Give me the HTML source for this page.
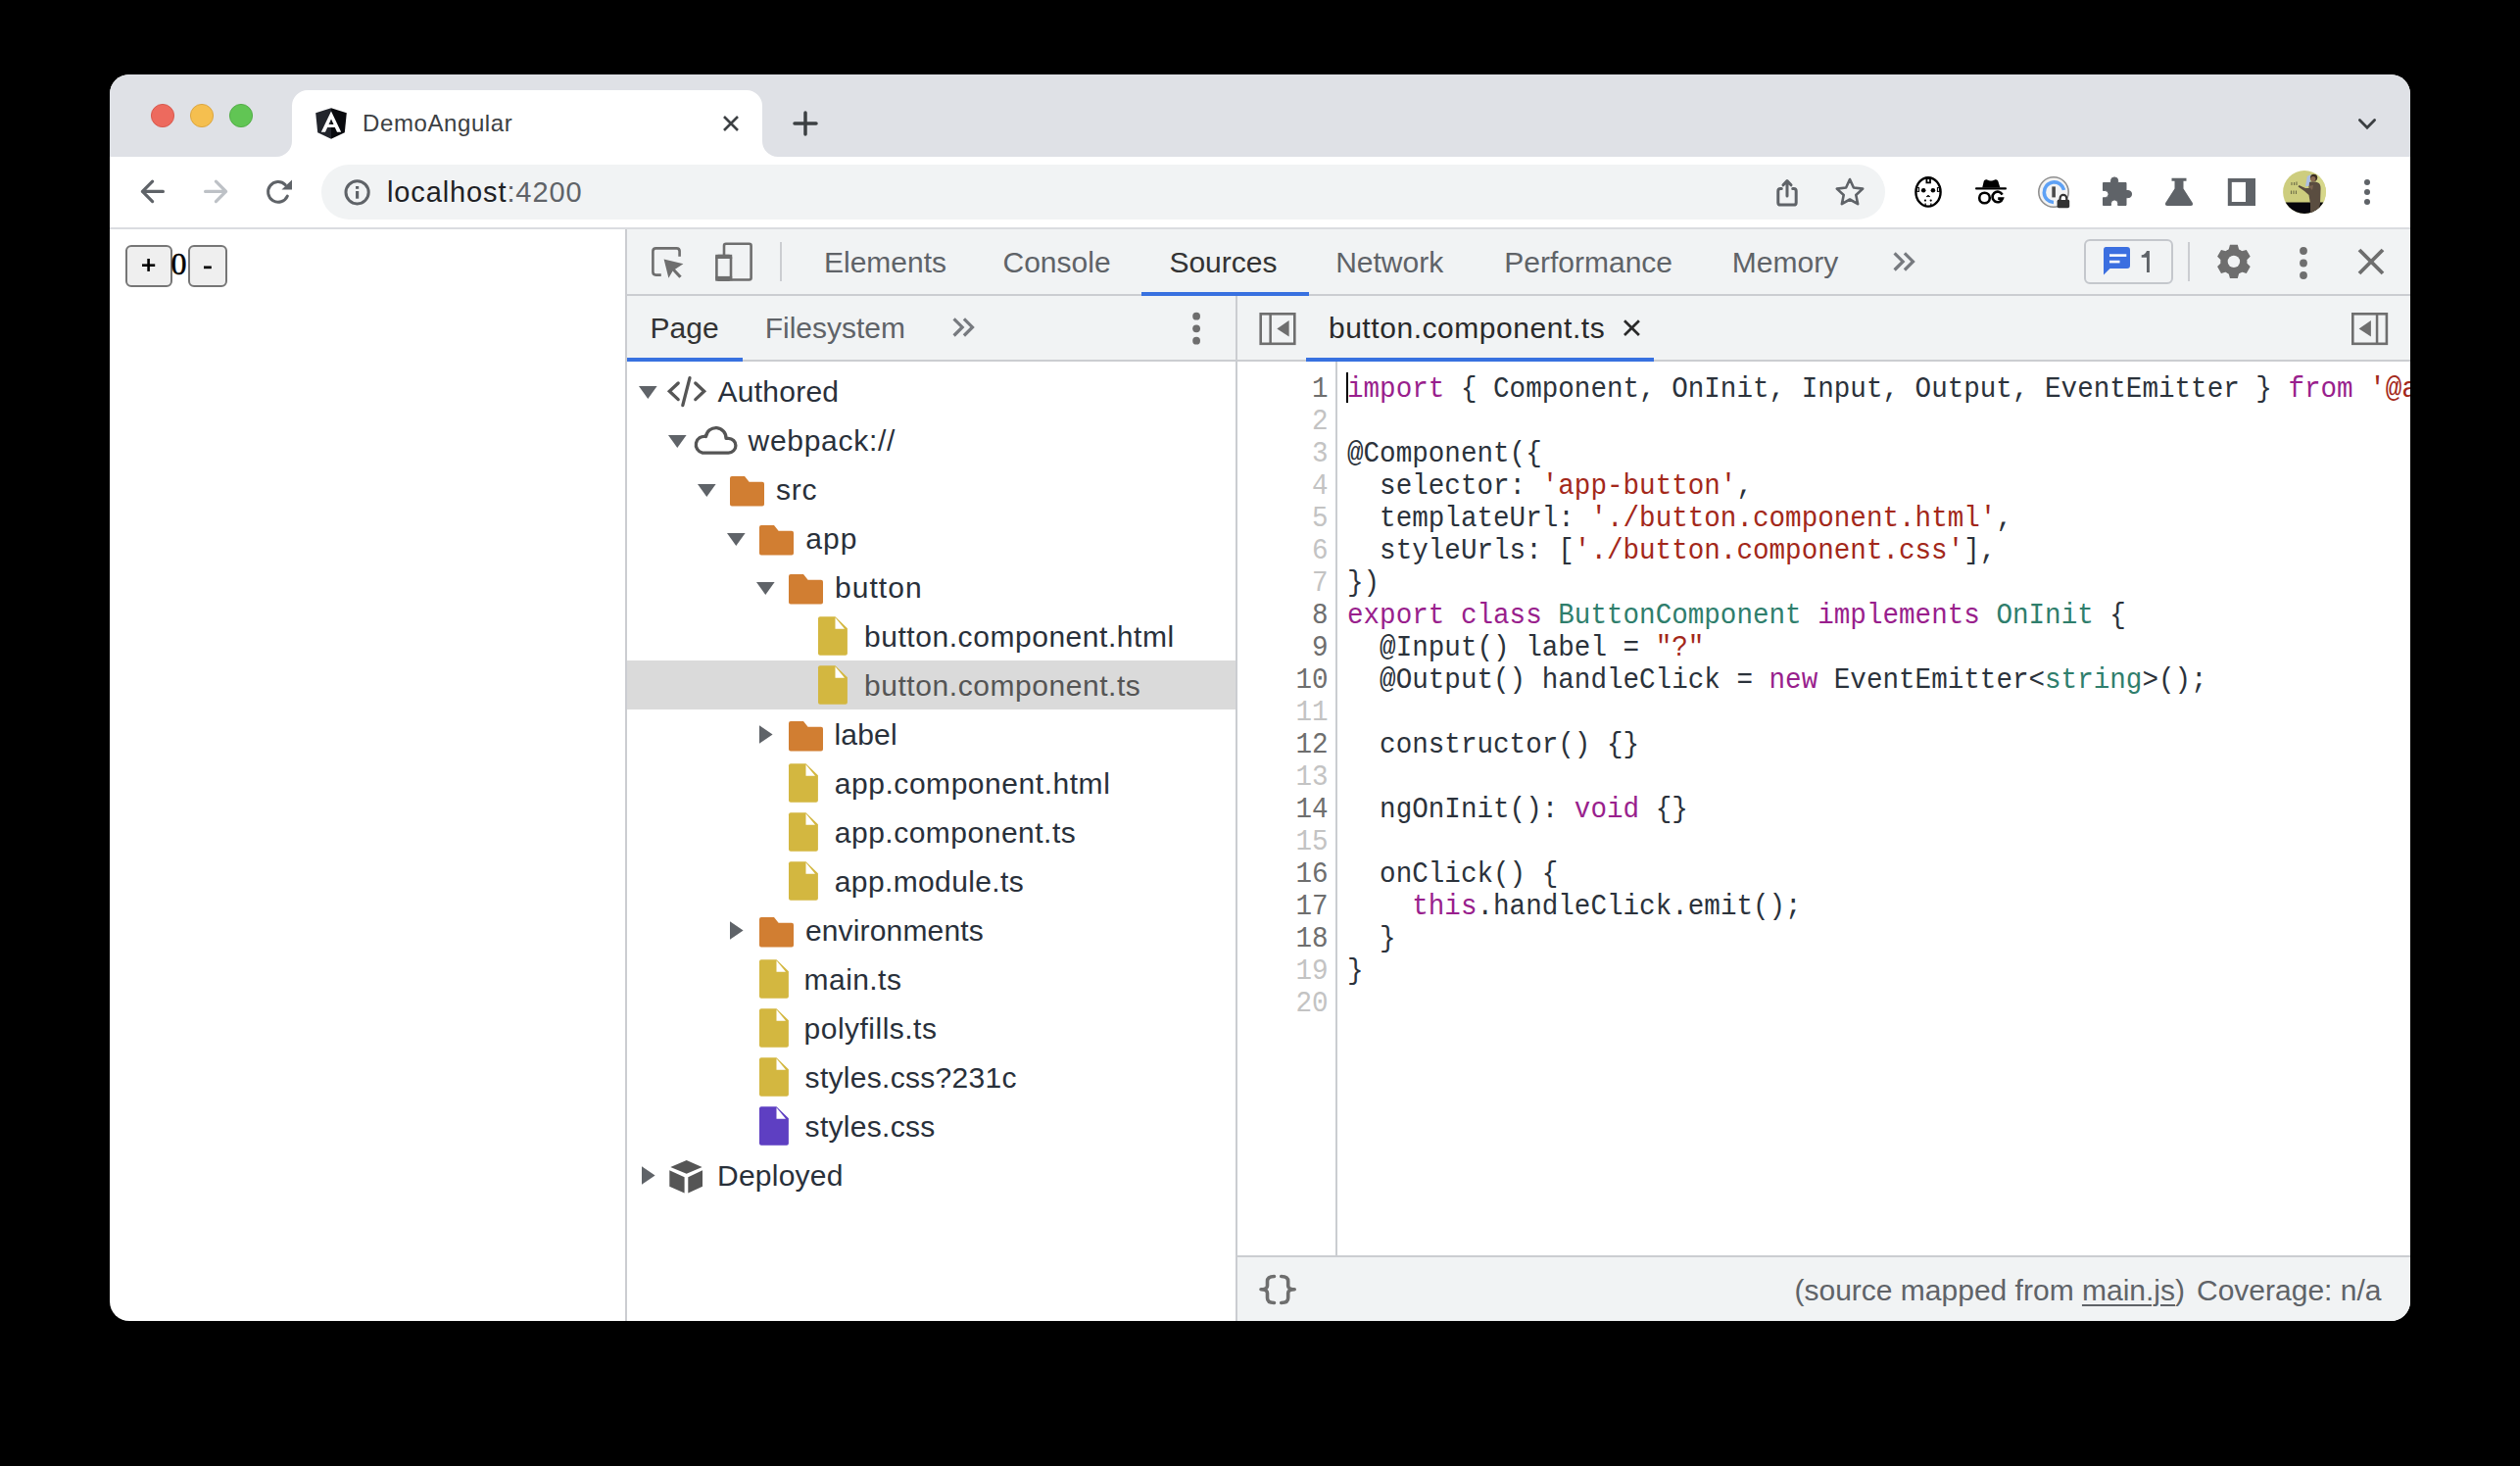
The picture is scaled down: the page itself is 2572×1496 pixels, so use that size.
<!DOCTYPE html>
<html><head><meta charset="utf-8"><title>DemoAngular - DevTools</title>
<style>
html,body{margin:0;padding:0;background:#000;width:2572px;height:1496px;overflow:hidden;}
body{position:relative;font-family:'Liberation Sans', sans-serif;}
svg{display:block}
</style></head><body>
<div id="win" style="position:absolute;left:112px;top:76px;width:2348px;height:1272px;border-radius:20px;overflow:hidden;background:#fff"><div style="position:absolute;left:-112px;top:-76px;width:2572px;height:1496px"><div style="position:absolute;left:112px;top:76px;width:2348px;height:84px;background:#dfe1e6;"></div><svg style="position:absolute;left:153px;top:105px;" width="26" height="26" viewBox="0 0 26 26"><circle cx="13" cy="13" r="11.6" fill="#ed6a5e" stroke="#d5554a" stroke-width="0.9"/></svg><svg style="position:absolute;left:193px;top:105px;" width="26" height="26" viewBox="0 0 26 26"><circle cx="13" cy="13" r="11.6" fill="#f5bf4f" stroke="#d9a23a" stroke-width="0.9"/></svg><svg style="position:absolute;left:233px;top:105px;" width="26" height="26" viewBox="0 0 26 26"><circle cx="13" cy="13" r="11.6" fill="#61c554" stroke="#4ea943" stroke-width="0.9"/></svg><svg style="position:absolute;left:266px;top:92px;" width="544" height="68" viewBox="0 0 544 68"><path d="M16,68 A16,16 0 0 0 32,52 L32,16 A16,16 0 0 1 48,0 L496,0 A16,16 0 0 1 512,16 L512,52 A16,16 0 0 0 528,68 Z" fill="#fff"/></svg><svg style="position:absolute;left:322px;top:110px;" width="32" height="32" viewBox="0 0 32 32"><path d="M16,0.2 L0.2,5.3 L2.2,25.2 L16,31.8 Z" fill="#22252c"/><path d="M16,0.2 L31.8,5.3 L29.8,25.2 L16,31.8 Z" fill="#090a0e"/><path d="M16,3.5 L26.2,24.8 L22,24.8 L19.8,19.9 L12.2,19.9 L10,24.8 L5.8,24.8 Z M16,11.6 L13.5,17.1 L18.5,17.1 Z" fill="#fff" fill-rule="evenodd"/></svg><div style="position:absolute;left:370.00px;top:113.68px;font-family:'Liberation Sans', sans-serif;font-size:24px;line-height:24px;color:#3c4043;white-space:pre;letter-spacing:0.6px">DemoAngular</div><svg style="position:absolute;left:736px;top:116px;" width="20" height="20" viewBox="0 0 20 20"><path d="M3,3 L17,17 M17,3 L3,17" stroke="#3c4043" stroke-width="2.6" stroke-linecap="butt"/></svg><svg style="position:absolute;left:809px;top:113px;" width="26" height="26" viewBox="0 0 26 26"><path d="M13,2 L13,24 M2,13 L24,13" stroke="#3c4043" stroke-width="3.5" stroke-linecap="round"/></svg><svg style="position:absolute;left:2404px;top:118px;" width="24" height="16" viewBox="0 0 24 16"><path d="M4.4,4.6 L12,12.2 L19.6,4.6" stroke="#3c4043" stroke-width="2.8" fill="none" stroke-linecap="round" stroke-linejoin="miter"/></svg><div style="position:absolute;left:112px;top:232px;width:2348px;height:2px;background:#dadce0;"></div><svg style="position:absolute;left:138px;top:180px;" width="34" height="32" viewBox="0 0 34 32"><path d="M7.4,15.4 L28.4,15.4 M17.6,5.2 L7.4,15.4 L17.6,25.6" stroke="#5f6368" stroke-width="3.2" fill="none" stroke-linecap="round" stroke-linejoin="round"/></svg><svg style="position:absolute;left:202px;top:180px;" width="34" height="32" viewBox="0 0 34 32"><path d="M7.6,15.4 L28.6,15.4 M18.4,5.2 L28.6,15.4 L18.4,25.6" stroke="#bdc1c6" stroke-width="3.2" fill="none" stroke-linecap="round" stroke-linejoin="round"/></svg><svg style="position:absolute;left:266px;top:178px;" width="36" height="36" viewBox="0 0 36 36"><path d="M27.33,22.05 A10.3,10.3 0 1 1 25.2,10.6" stroke="#5f6368" stroke-width="3" fill="none" stroke-linecap="round"/><path d="M21.5,15.6 L32,15.6 L32,5.4 Z" fill="#5f6368"/></svg><div style="position:absolute;left:328px;top:168px;width:1596px;height:56px;background:#f1f3f4;border-radius:28px"></div><svg style="position:absolute;left:350px;top:182px;" width="30" height="30" viewBox="0 0 30 30"><circle cx="14.6" cy="14.3" r="11.6" stroke="#5f6368" stroke-width="3" fill="none"/><rect x="13" y="8" width="3.2" height="2.8" fill="#5f6368"/><rect x="13" y="13" width="3.2" height="7.7" fill="#5f6368"/></svg><div style="position:absolute;left:395.00px;top:181.95px;font-family:'Liberation Sans', sans-serif;font-size:29px;line-height:29px;color:#202124;white-space:pre;letter-spacing:0.885px">localhost<span style="color:#5f6368">:4200</span></div><svg style="position:absolute;left:1808px;top:178px;" width="32" height="36" viewBox="0 0 32 36"><path d="M10.3,14.5 L9.3,14.5 Q6.8,14.5 6.8,17 L6.8,28.7 Q6.8,31.1 9.3,31.1 L22.7,31.1 Q25.2,31.1 25.2,28.7 L25.2,17 Q25.2,14.5 22.7,14.5 L21.7,14.5" stroke="#5f6368" stroke-width="3" fill="none" stroke-linecap="round"/><path d="M16,22 L16,6.8 M12,10.8 L16,6.6 L20,10.8" stroke="#5f6368" stroke-width="3" fill="none" stroke-linecap="round" stroke-linejoin="round"/></svg><svg style="position:absolute;left:1870px;top:178px;" width="36" height="36" viewBox="0 0 36 36"><polygon points="18.00,5.00 21.88,13.56 31.22,14.60 24.28,20.94 26.17,30.15 18.00,25.50 9.83,30.15 11.72,20.94 4.78,14.60 14.12,13.56" stroke="#5f6368" stroke-width="2.6" fill="none" stroke-linejoin="round"/></svg><svg style="position:absolute;left:1952px;top:178px;" width="32" height="36" viewBox="0 0 32 36"><ellipse cx="16" cy="17.9" rx="12.6" ry="14.7" stroke="#000" stroke-width="2.4" fill="#fff"/><rect x="14.4" y="4.2" width="3.6" height="4.2" stroke="#000" stroke-width="1.8" fill="none"/><circle cx="11.2" cy="16.3" r="2.3" fill="#000"/><circle cx="20.9" cy="16.3" r="2.3" fill="#000"/><path d="M14.2,22.6 L17.8,22.6 L16,21.3 Z" fill="#000" stroke="#000" stroke-width="0.8"/><rect x="4.6" y="13.6" width="2" height="3.8" stroke="#000" stroke-width="1" fill="none"/><rect x="25.4" y="13.6" width="2" height="3.8" stroke="#000" stroke-width="1" fill="none"/><circle cx="13" cy="26.6" r="1.1" fill="#000"/><circle cx="18.7" cy="26.6" r="1.1" fill="#000"/><rect x="12.5" y="29.5" width="1.3" height="2.5" fill="#000"/><rect x="18.2" y="29.5" width="1.3" height="2.5" fill="#000"/></svg><svg style="position:absolute;left:2014px;top:180px;" width="36" height="32" viewBox="0 0 36 32"><path d="M9.2,11.6 L10.8,4.8 Q11.5,3 13.6,3.3 L16,4.2 Q18,4.6 20,4.2 L22.6,3.3 Q24.6,3 25.3,4.8 L27.4,11.6 Z" fill="#000"/><rect x="2" y="11.2" width="32" height="2.2" rx="1" fill="#000"/><circle cx="11.5" cy="22" r="5.3" stroke="#000" stroke-width="2.6" fill="none"/><path d="M29.6,18.6 A5.3,5.3 0 1 0 29.9,22.6 L25.2,22.6" stroke="#000" stroke-width="2.6" fill="none"/></svg><svg style="position:absolute;left:2078px;top:178px;" width="36" height="36" viewBox="0 0 36 36"><circle cx="18" cy="18" r="15.2" stroke="#8f8f8f" stroke-width="1.6" fill="#f3f3f3"/><path d="M28.6,15.8 A10.3,10.3 0 1 0 18,28.5" stroke="#5ea1f5" stroke-width="3.6" fill="none"/><rect x="16.3" y="12.4" width="3.6" height="11" fill="#4a4a4a"/><rect x="21.6" y="25.6" width="12.6" height="8.6" rx="1.8" fill="#333"/><path d="M24.6,26 L24.6,24.2 A3.3,3.3 0 0 1 31.2,24.2 L31.2,26" stroke="#333" stroke-width="2.1" fill="#fff"/></svg><svg style="position:absolute;left:2144px;top:178px;" width="34" height="36" viewBox="0 0 34 36"><path d="M2.5,8.5 L10.5,8.5 L10.5,6.5 A3.6,3.6 0 0 1 17.7,6.5 L17.7,8.5 L26,8.5 L26,16.5 L28,16.5 A3.6,3.6 0 0 1 28,23.7 L26,23.7 L26,31.5 L17.7,31.5 L17.7,29.5 A3.6,3.6 0 0 0 10.5,29.5 L10.5,31.5 L2.5,31.5 L2.5,23.7 L4.5,23.7 A3.6,3.6 0 0 0 4.5,16.5 L2.5,16.5 Z" fill="#5f6368" stroke="#5f6368" stroke-width="1" stroke-linejoin="round"/></svg><svg style="position:absolute;left:2208px;top:178px;" width="32" height="36" viewBox="0 0 32 36"><path d="M8.5,3.7 L23.5,3.7 L23.5,6.7 L20.5,6.7 L20.5,14.5 L29.8,29 Q30.8,32 27.8,32 L4.2,32 Q1.2,32 2.2,29 L11.5,14.5 L11.5,6.7 L8.5,6.7 Z" fill="#5f6368"/></svg><svg style="position:absolute;left:2272px;top:180px;" width="32" height="32" viewBox="0 0 32 32"><rect x="1.8" y="2" width="28.2" height="28" fill="#5f6368"/><rect x="5.8" y="5.9" width="14.2" height="20.1" fill="#fff"/></svg><svg style="position:absolute;left:2328px;top:172px;" width="48" height="48" viewBox="0 0 48 48"><defs><clipPath id="av"><circle cx="24" cy="24" r="21.9"/></clipPath></defs><g clip-path="url(#av)"><rect x="0" y="0" width="48" height="48" fill="#cdcd7e"/><rect x="34" y="0" width="14" height="36" fill="#d6d78a"/><rect x="0" y="34.5" width="48" height="14" fill="#07060c"/><path d="M26.8,8 L30.8,5.8 L29.5,11 L31.5,17 L25,18.5 Z" fill="#a9bdf0" opacity="0.9"/><path d="M29,14 Q33,12.5 38,14.5 Q41,16 40.5,22 L40,36 L37.5,48 L30,48 L30,36 L28.5,27 L24,23 L17.5,18.5 L18.5,17 L25,20 L28.5,20 Z" fill="#5a4d40"/><path d="M28,18 L33,17 L32,22 Z" fill="#7a6350"/><circle cx="33.6" cy="9.3" r="3.6" fill="#3a2c22"/><circle cx="32.8" cy="10.6" r="2.6" fill="#8b6b52"/><path d="M11,14 L11,17 M13.6,14 L13.6,17 M16,13.5 L16,17 M10.5,22.5 L10.5,26 M13,22.5 L13,26 M15.5,22.5 L15.5,26" stroke="#6e6e48" stroke-width="1.1"/></g></svg><svg style="position:absolute;left:2408px;top:180px;" width="16" height="32" viewBox="0 0 16 32"><circle cx="8" cy="6" r="3" fill="#5f6368"/><circle cx="8" cy="16" r="3" fill="#5f6368"/><circle cx="8" cy="26" r="3" fill="#5f6368"/></svg><div style="position:absolute;left:128px;top:250px;width:47.5px;height:42.5px;background:#efefef;box-sizing:border-box;border:2px solid #767676;border-radius:6px"></div><div style="position:absolute;left:192px;top:250px;width:40px;height:42.5px;background:#efefef;box-sizing:border-box;border:2px solid #767676;border-radius:6px"></div><svg style="position:absolute;left:140px;top:260px;" width="24" height="24" viewBox="0 0 24 24"><rect x="5" y="9.4" width="13.2" height="2.6" fill="#000"/><rect x="10.3" y="4" width="2.6" height="12.9" fill="#000"/></svg><div style="position:absolute;left:174.50px;top:253.20px;font-family:'Liberation Serif', serif;font-size:32px;line-height:32px;color:#000;white-space:pre;-webkit-text-stroke:0.5px #000">0</div><svg style="position:absolute;left:204px;top:266px;" width="16" height="12" viewBox="0 0 16 12"><rect x="4" y="5.5" width="7.8" height="2.7" fill="#000"/></svg><div style="position:absolute;left:638px;top:234px;width:2px;height:1114px;background:#cbcdd1;"></div><div style="position:absolute;left:640px;top:234px;width:1820px;height:66px;background:#f1f3f4;"></div><div style="position:absolute;left:640px;top:300px;width:1820px;height:2px;background:#cbcdd1;"></div><svg style="position:absolute;left:660px;top:246px;" width="42" height="42" viewBox="0 0 42 42"><path d="M14.8,34.6 L9.4,34.6 Q6.4,34.6 6.4,31.6 L6.4,10.4 Q6.4,7.4 9.4,7.4 L30.6,7.4 Q33.6,7.4 33.6,10.4 L33.6,15.7" stroke="#6e6e6e" stroke-width="2.6" fill="none"/><path d="M17.6,18.5 L37.4,23.3 L29,28.8 L35.7,35.8 L33.3,37.7 L26.6,30.5 L22.4,37.8 Z" fill="#6e6e6e"/></svg><svg style="position:absolute;left:726px;top:244px;" width="46" height="46" viewBox="0 0 46 46"><path d="M13,16 L13,6.7 Q13,4.7 15,4.7 L38.6,4.7 Q40.6,4.7 40.6,6.7 L40.6,39.8 Q40.6,41.5 38.6,41.5 L20.5,41.5" stroke="#6e6e6e" stroke-width="2.6" fill="none"/><rect x="5.4" y="17" width="14.6" height="24.6" rx="2" stroke="#6e6e6e" stroke-width="2.6" fill="none"/><rect x="4.2" y="15.8" width="17" height="4.2" fill="#6e6e6e"/><rect x="4.2" y="37.9" width="17" height="4.8" fill="#6e6e6e"/></svg><div style="position:absolute;left:796px;top:247px;width:2px;height:40px;background:#cbcdd1;"></div><div style="position:absolute;left:841.00px;top:252.60px;font-family:'Liberation Sans', sans-serif;font-size:30px;line-height:30px;color:#5f6368;white-space:pre;">Elements</div><div style="position:absolute;left:1023.50px;top:252.60px;font-family:'Liberation Sans', sans-serif;font-size:30px;line-height:30px;color:#5f6368;white-space:pre;">Console</div><div style="position:absolute;left:1193.40px;top:252.60px;font-family:'Liberation Sans', sans-serif;font-size:30px;line-height:30px;color:#333;white-space:pre;">Sources</div><div style="position:absolute;left:1363.20px;top:252.60px;font-family:'Liberation Sans', sans-serif;font-size:30px;line-height:30px;color:#5f6368;white-space:pre;">Network</div><div style="position:absolute;left:1535.30px;top:252.60px;font-family:'Liberation Sans', sans-serif;font-size:30px;line-height:30px;color:#5f6368;white-space:pre;">Performance</div><div style="position:absolute;left:1767.80px;top:252.60px;font-family:'Liberation Sans', sans-serif;font-size:30px;line-height:30px;color:#5f6368;white-space:pre;">Memory</div><div style="position:absolute;left:1165px;top:298px;width:171px;height:4px;background:#3871e0;"></div><svg style="position:absolute;left:1929.5px;top:254.8px;" width="28" height="26" viewBox="0 0 28 26"><path d="M3.6,3.3 L12.2,11.9 L3.6,20.5 M13.9,3.3 L22.5,11.9 L13.9,20.5" stroke="#777a7f" stroke-width="3.2" fill="none" stroke-linejoin="miter"/></svg><div style="position:absolute;left:2127px;top:244px;width:91px;height:46px;background:transparent;box-sizing:border-box;border:2px solid #c4c7cc;border-radius:6px"></div><svg style="position:absolute;left:2144px;top:250px;" width="34" height="34" viewBox="0 0 34 34"><path d="M5.5,2 L27,2 Q30,2 30,5 L30,21 Q30,24 27,24 L9.5,24 L3,30.5 L3,5 Q3,2 5.5,2 Z" fill="#3b6fe0"/><rect x="9" y="9.3" width="17.3" height="2.6" fill="#fff"/><rect x="9" y="15.8" width="10.5" height="2.6" fill="#fff"/></svg><svg style="position:absolute;left:2180px;top:250px;" width="20" height="32" viewBox="0 0 20 32"><path d="M11,6 L13.9,6 L13.9,28 L11,28 L11,12.8 L5.7,12.8 L5.7,10.3 Q9.6,10 11,6 Z" fill="#5f6368"/></svg><div style="position:absolute;left:2233px;top:247px;width:2px;height:40px;background:#cbcdd1;"></div><svg style="position:absolute;left:2260px;top:247px;" width="40" height="40" viewBox="0 0 40 40"><polygon points="14.68,7.56 15.97,2.74 23.83,2.74 25.12,7.56 27.98,9.21 32.79,7.92 36.72,14.72 33.20,18.25 33.20,21.55 36.72,25.08 32.79,31.88 27.98,30.59 25.12,32.24 23.83,37.06 15.97,37.06 14.68,32.24 11.82,30.59 7.01,31.88 3.08,25.08 6.60,21.55 6.60,18.25 3.08,14.72 7.01,7.92 11.82,9.21" fill="#6e6e6e"/><circle cx="19.9" cy="19.9" r="13.4" fill="#6e6e6e"/><circle cx="19.9" cy="19.9" r="6.2" fill="#f1f3f4"/></svg><svg style="position:absolute;left:2343px;top:248px;" width="16" height="40" viewBox="0 0 16 40"><circle cx="8" cy="8" r="3.9" fill="#6e6e6e"/><circle cx="8" cy="20.5" r="3.9" fill="#6e6e6e"/><circle cx="8" cy="33" r="3.9" fill="#6e6e6e"/></svg><svg style="position:absolute;left:2404px;top:251px;" width="32" height="32" viewBox="0 0 32 32"><path d="M4,4 L28,28 M28,4 L4,28" stroke="#6e6e6e" stroke-width="3.8"/></svg><div style="position:absolute;left:640px;top:302px;width:1820px;height:65px;background:#f1f3f4;"></div><div style="position:absolute;left:640px;top:367px;width:1820px;height:2px;background:#cbcdd1;"></div><div style="position:absolute;left:1261px;top:302px;width:2px;height:1046px;background:#cbcdd1;"></div><div style="position:absolute;left:663.50px;top:319.61px;font-family:'Liberation Sans', sans-serif;font-size:30px;line-height:30px;color:#333;white-space:pre;">Page</div><div style="position:absolute;left:780.70px;top:319.61px;font-family:'Liberation Sans', sans-serif;font-size:30px;line-height:30px;color:#5f6368;white-space:pre;">Filesystem</div><svg style="position:absolute;left:970px;top:322px;" width="28" height="26" viewBox="0 0 28 26"><path d="M3.6,3.3 L12.2,11.9 L3.6,20.5 M13.9,3.3 L22.5,11.9 L13.9,20.5" stroke="#777a7f" stroke-width="3.2" fill="none" stroke-linejoin="miter"/></svg><div style="position:absolute;left:640px;top:365px;width:118px;height:4px;background:#3871e0;"></div><svg style="position:absolute;left:1213px;top:314px;" width="16" height="40" viewBox="0 0 16 40"><circle cx="8.1" cy="8.7" r="3.9" fill="#6e6e6e"/><circle cx="8.1" cy="21.3" r="3.9" fill="#6e6e6e"/><circle cx="8.1" cy="33.7" r="3.9" fill="#6e6e6e"/></svg><svg style="position:absolute;left:1284px;top:317px;" width="42" height="38" viewBox="0 0 42 38"><rect x="2.7" y="3.3" width="34.6" height="30.5" stroke="#6e6e6e" stroke-width="2.6" fill="none"/><rect x="11.4" y="3" width="2.5" height="31" fill="#6e6e6e"/><path d="M31.6,10 L19.3,18.4 L31.6,26.6 Z" fill="#6e6e6e"/></svg><div style="position:absolute;left:1355.90px;top:319.91px;font-family:'Liberation Sans', sans-serif;font-size:30px;line-height:30px;color:#2a2a2a;white-space:pre;letter-spacing:0.556px">button.component.ts</div><svg style="position:absolute;left:1652px;top:322px;" width="26" height="26" viewBox="0 0 26 26"><path d="M6,5.2 L20.9,20 M20.9,5.2 L6,20" stroke="#2a2a2a" stroke-width="2.7"/></svg><div style="position:absolute;left:1333px;top:365px;width:355px;height:4px;background:#3871e0;"></div><svg style="position:absolute;left:2398px;top:317px;" width="42" height="38" viewBox="0 0 42 38"><rect x="3.3" y="3.3" width="34.6" height="30.5" stroke="#6e6e6e" stroke-width="2.6" fill="none"/><rect x="26.8" y="3" width="2.5" height="31" fill="#6e6e6e"/><path d="M9.6,18.4 L21.9,10 L21.9,26.6 Z" fill="#6e6e6e"/></svg><div style="position:absolute;left:640px;top:369px;width:621px;height:979px;background:#fff;"></div><div style="position:absolute;left:640px;top:674px;width:621px;height:50px;background:#dadada;"></div><svg style="position:absolute;left:650px;top:392px;" width="24" height="18" viewBox="0 0 24 18"><path d="M2,2 L20.6,2 L11.3,15 Z" fill="#5f6368"/></svg><svg style="position:absolute;left:676px;top:380px;" width="50" height="40" viewBox="0 0 50 40"><path d="M16.2,11 L7.3,19.3 L16.2,27.6 M33.8,11 L42.7,19.3 L33.8,27.6 M28,5.6 L20.8,33.6" stroke="#555" stroke-width="3.3" fill="none" stroke-linecap="round" stroke-linejoin="miter"/></svg><div style="position:absolute;left:732.60px;top:384.61px;font-family:'Liberation Sans', sans-serif;font-size:30px;line-height:30px;color:#29303a;white-space:pre;letter-spacing:0.24px">Authored</div><svg style="position:absolute;left:680px;top:442px;" width="24" height="18" viewBox="0 0 24 18"><path d="M2,2 L20.6,2 L11.3,15 Z" fill="#5f6368"/></svg><svg style="position:absolute;left:704px;top:431px;" width="52" height="34" viewBox="0 0 52 34"><path d="M13,31.1 L39.5,31.1 A7.4,7.4 0 0 0 39.5,16.3 L37,16.3 A10.3,10.3 0 0 0 16.5,14.5 A8.4,8.4 0 0 0 13,31.1 Z" stroke="#555" stroke-width="3.3" fill="none" stroke-linejoin="round"/></svg><div style="position:absolute;left:763.60px;top:434.61px;font-family:'Liberation Sans', sans-serif;font-size:30px;line-height:30px;color:#29303a;white-space:pre;letter-spacing:0.7px">webpack://</div><svg style="position:absolute;left:710px;top:492px;" width="24" height="18" viewBox="0 0 24 18"><path d="M2,2 L20.6,2 L11.3,15 Z" fill="#5f6368"/></svg><svg style="position:absolute;left:743px;top:484px;" width="40" height="36" viewBox="0 0 40 36"><path d="M4,2.1 L17,2.1 L21.6,7.8 L35,7.8 Q37,7.8 37,9.8 L37,30.4 Q37,32.5 35,32.5 L4,32.5 Q2,32.5 2,30.4 L2,4.1 Q2,2.1 4,2.1 Z" fill="#d17e32"/></svg><div style="position:absolute;left:792.10px;top:484.61px;font-family:'Liberation Sans', sans-serif;font-size:30px;line-height:30px;color:#29303a;white-space:pre;letter-spacing:0.65px">src</div><svg style="position:absolute;left:740px;top:542px;" width="24" height="18" viewBox="0 0 24 18"><path d="M2,2 L20.6,2 L11.3,15 Z" fill="#5f6368"/></svg><svg style="position:absolute;left:773px;top:534px;" width="40" height="36" viewBox="0 0 40 36"><path d="M4,2.1 L17,2.1 L21.6,7.8 L35,7.8 Q37,7.8 37,9.8 L37,30.4 Q37,32.5 35,32.5 L4,32.5 Q2,32.5 2,30.4 L2,4.1 Q2,2.1 4,2.1 Z" fill="#d17e32"/></svg><div style="position:absolute;left:822.20px;top:534.61px;font-family:'Liberation Sans', sans-serif;font-size:30px;line-height:30px;color:#29303a;white-space:pre;letter-spacing:1.05px">app</div><svg style="position:absolute;left:770px;top:592px;" width="24" height="18" viewBox="0 0 24 18"><path d="M2,2 L20.6,2 L11.3,15 Z" fill="#5f6368"/></svg><svg style="position:absolute;left:803px;top:584px;" width="40" height="36" viewBox="0 0 40 36"><path d="M4,2.1 L17,2.1 L21.6,7.8 L35,7.8 Q37,7.8 37,9.8 L37,30.4 Q37,32.5 35,32.5 L4,32.5 Q2,32.5 2,30.4 L2,4.1 Q2,2.1 4,2.1 Z" fill="#d17e32"/></svg><div style="position:absolute;left:851.90px;top:584.61px;font-family:'Liberation Sans', sans-serif;font-size:30px;line-height:30px;color:#29303a;white-space:pre;letter-spacing:1.06px">button</div><svg style="position:absolute;left:833px;top:627px;" width="36" height="46" viewBox="0 0 36 46"><path d="M4,2.3 L19.5,2.3 L31.9,14.3 L31.9,39.7 Q31.9,41.7 29.9,41.7 L4,41.7 Q2,41.7 2,39.7 L2,4.3 Q2,2.3 4,2.3 Z" fill="#d3b740"/><path d="M19.5,3.3 L19.5,14.7 L29,14.7 Z" fill="#fff"/></svg><div style="position:absolute;left:882.00px;top:634.61px;font-family:'Liberation Sans', sans-serif;font-size:30px;line-height:30px;color:#29303a;white-space:pre;letter-spacing:0.55px">button.component.html</div><svg style="position:absolute;left:833px;top:677px;" width="36" height="46" viewBox="0 0 36 46"><path d="M4,2.3 L19.5,2.3 L31.9,14.3 L31.9,39.7 Q31.9,41.7 29.9,41.7 L4,41.7 Q2,41.7 2,39.7 L2,4.3 Q2,2.3 4,2.3 Z" fill="#d3b740"/><path d="M19.5,3.3 L19.5,14.7 L29,14.7 Z" fill="#fff"/></svg><div style="position:absolute;left:882.00px;top:684.61px;font-family:'Liberation Sans', sans-serif;font-size:30px;line-height:30px;color:#555;white-space:pre;letter-spacing:0.556px">button.component.ts</div><svg style="position:absolute;left:772px;top:738px;" width="20" height="24" viewBox="0 0 20 24"><path d="M3,2.3 L3,20.8 L16.6,11.4 Z" fill="#5f6368"/></svg><svg style="position:absolute;left:803px;top:734px;" width="40" height="36" viewBox="0 0 40 36"><path d="M4,2.1 L17,2.1 L21.6,7.8 L35,7.8 Q37,7.8 37,9.8 L37,30.4 Q37,32.5 35,32.5 L4,32.5 Q2,32.5 2,30.4 L2,4.1 Q2,2.1 4,2.1 Z" fill="#d17e32"/></svg><div style="position:absolute;left:851.50px;top:734.61px;font-family:'Liberation Sans', sans-serif;font-size:30px;line-height:30px;color:#29303a;white-space:pre;letter-spacing:0.175px">label</div><svg style="position:absolute;left:803px;top:777px;" width="36" height="46" viewBox="0 0 36 46"><path d="M4,2.3 L19.5,2.3 L31.9,14.3 L31.9,39.7 Q31.9,41.7 29.9,41.7 L4,41.7 Q2,41.7 2,39.7 L2,4.3 Q2,2.3 4,2.3 Z" fill="#d3b740"/><path d="M19.5,3.3 L19.5,14.7 L29,14.7 Z" fill="#fff"/></svg><div style="position:absolute;left:851.80px;top:784.61px;font-family:'Liberation Sans', sans-serif;font-size:30px;line-height:30px;color:#29303a;white-space:pre;letter-spacing:0.54px">app.component.html</div><svg style="position:absolute;left:803px;top:827px;" width="36" height="46" viewBox="0 0 36 46"><path d="M4,2.3 L19.5,2.3 L31.9,14.3 L31.9,39.7 Q31.9,41.7 29.9,41.7 L4,41.7 Q2,41.7 2,39.7 L2,4.3 Q2,2.3 4,2.3 Z" fill="#d3b740"/><path d="M19.5,3.3 L19.5,14.7 L29,14.7 Z" fill="#fff"/></svg><div style="position:absolute;left:851.80px;top:834.61px;font-family:'Liberation Sans', sans-serif;font-size:30px;line-height:30px;color:#29303a;white-space:pre;letter-spacing:0.5px">app.component.ts</div><svg style="position:absolute;left:803px;top:877px;" width="36" height="46" viewBox="0 0 36 46"><path d="M4,2.3 L19.5,2.3 L31.9,14.3 L31.9,39.7 Q31.9,41.7 29.9,41.7 L4,41.7 Q2,41.7 2,39.7 L2,4.3 Q2,2.3 4,2.3 Z" fill="#d3b740"/><path d="M19.5,3.3 L19.5,14.7 L29,14.7 Z" fill="#fff"/></svg><div style="position:absolute;left:851.80px;top:884.61px;font-family:'Liberation Sans', sans-serif;font-size:30px;line-height:30px;color:#29303a;white-space:pre;letter-spacing:0.375px">app.module.ts</div><svg style="position:absolute;left:742px;top:938px;" width="20" height="24" viewBox="0 0 20 24"><path d="M3,2.3 L3,20.8 L16.6,11.4 Z" fill="#5f6368"/></svg><svg style="position:absolute;left:773px;top:934px;" width="40" height="36" viewBox="0 0 40 36"><path d="M4,2.1 L17,2.1 L21.6,7.8 L35,7.8 Q37,7.8 37,9.8 L37,30.4 Q37,32.5 35,32.5 L4,32.5 Q2,32.5 2,30.4 L2,4.1 Q2,2.1 4,2.1 Z" fill="#d17e32"/></svg><div style="position:absolute;left:821.90px;top:934.61px;font-family:'Liberation Sans', sans-serif;font-size:30px;line-height:30px;color:#29303a;white-space:pre;letter-spacing:0.164px">environments</div><svg style="position:absolute;left:773px;top:977px;" width="36" height="46" viewBox="0 0 36 46"><path d="M4,2.3 L19.5,2.3 L31.9,14.3 L31.9,39.7 Q31.9,41.7 29.9,41.7 L4,41.7 Q2,41.7 2,39.7 L2,4.3 Q2,2.3 4,2.3 Z" fill="#d3b740"/><path d="M19.5,3.3 L19.5,14.7 L29,14.7 Z" fill="#fff"/></svg><div style="position:absolute;left:820.60px;top:984.61px;font-family:'Liberation Sans', sans-serif;font-size:30px;line-height:30px;color:#29303a;white-space:pre;letter-spacing:0.433px">main.ts</div><svg style="position:absolute;left:773px;top:1027px;" width="36" height="46" viewBox="0 0 36 46"><path d="M4,2.3 L19.5,2.3 L31.9,14.3 L31.9,39.7 Q31.9,41.7 29.9,41.7 L4,41.7 Q2,41.7 2,39.7 L2,4.3 Q2,2.3 4,2.3 Z" fill="#d3b740"/><path d="M19.5,3.3 L19.5,14.7 L29,14.7 Z" fill="#fff"/></svg><div style="position:absolute;left:820.60px;top:1034.61px;font-family:'Liberation Sans', sans-serif;font-size:30px;line-height:30px;color:#29303a;white-space:pre;letter-spacing:0.48px">polyfills.ts</div><svg style="position:absolute;left:773px;top:1077px;" width="36" height="46" viewBox="0 0 36 46"><path d="M4,2.3 L19.5,2.3 L31.9,14.3 L31.9,39.7 Q31.9,41.7 29.9,41.7 L4,41.7 Q2,41.7 2,39.7 L2,4.3 Q2,2.3 4,2.3 Z" fill="#d3b740"/><path d="M19.5,3.3 L19.5,14.7 L29,14.7 Z" fill="#fff"/></svg><div style="position:absolute;left:821.60px;top:1084.61px;font-family:'Liberation Sans', sans-serif;font-size:30px;line-height:30px;color:#29303a;white-space:pre;letter-spacing:0.293px">styles.css?231c</div><svg style="position:absolute;left:773px;top:1127px;" width="36" height="46" viewBox="0 0 36 46"><path d="M4,2.3 L19.5,2.3 L31.9,14.3 L31.9,39.7 Q31.9,41.7 29.9,41.7 L4,41.7 Q2,41.7 2,39.7 L2,4.3 Q2,2.3 4,2.3 Z" fill="#5e3fc2"/><path d="M19.5,3.3 L19.5,14.7 L29,14.7 Z" fill="#fff"/></svg><div style="position:absolute;left:821.60px;top:1134.61px;font-family:'Liberation Sans', sans-serif;font-size:30px;line-height:30px;color:#29303a;white-space:pre;letter-spacing:0.3px">styles.css</div><svg style="position:absolute;left:652px;top:1188px;" width="20" height="24" viewBox="0 0 20 24"><path d="M3,2.3 L3,20.8 L16.6,11.4 Z" fill="#5f6368"/></svg><svg style="position:absolute;left:680px;top:1180px;" width="40" height="40" viewBox="0 0 40 40"><path d="M4.3,11.1 L20.7,4.1 L36.6,11.1 L20.7,17.8 Z M3.3,14.2 L18.6,21.3 L18.6,37.5 L3.3,30.7 Z M22.3,21.3 L37,14.2 L37,30.7 L22.3,37.5 Z" fill="#555"/></svg><div style="position:absolute;left:732.00px;top:1184.61px;font-family:'Liberation Sans', sans-serif;font-size:30px;line-height:30px;color:#29303a;white-space:pre;letter-spacing:0.243px">Deployed</div><div style="position:absolute;left:1263px;top:369px;width:1197px;height:912px;background:#fff;"></div><div style="position:absolute;left:1363px;top:369px;width:2px;height:912px;background:#cbcdd1;"></div><div style="position:absolute;left:1338.94px;top:384.04px;font-family:'Liberation Mono', monospace;font-size:27.6px;line-height:27.6px;color:#6e6e6e;white-space:pre;transform:scaleY(1.1);transform-origin:0 21.16px">1</div><div style="position:absolute;left:1375.00px;top:384.04px;font-family:'Liberation Mono', monospace;font-size:27.6px;line-height:27.6px;color:#2b323b;white-space:pre;transform:scaleY(1.06);transform-origin:0 21.16px"><span style="color:#991f8d">import</span> { Component, OnInit, Input, Output, EventEmitter } <span style="color:#991f8d">from</span> <span style="color:#a3281a">&#x27;@angular/core&#x27;</span>;</div><div style="position:absolute;left:1338.94px;top:417.04px;font-family:'Liberation Mono', monospace;font-size:27.6px;line-height:27.6px;color:#c3c3c3;white-space:pre;transform:scaleY(1.1);transform-origin:0 21.16px">2</div><div style="position:absolute;left:1338.94px;top:450.04px;font-family:'Liberation Mono', monospace;font-size:27.6px;line-height:27.6px;color:#c3c3c3;white-space:pre;transform:scaleY(1.1);transform-origin:0 21.16px">3</div><div style="position:absolute;left:1375.00px;top:450.04px;font-family:'Liberation Mono', monospace;font-size:27.6px;line-height:27.6px;color:#2b323b;white-space:pre;transform:scaleY(1.06);transform-origin:0 21.16px">@Component({</div><div style="position:absolute;left:1338.94px;top:483.04px;font-family:'Liberation Mono', monospace;font-size:27.6px;line-height:27.6px;color:#c3c3c3;white-space:pre;transform:scaleY(1.1);transform-origin:0 21.16px">4</div><div style="position:absolute;left:1375.00px;top:483.04px;font-family:'Liberation Mono', monospace;font-size:27.6px;line-height:27.6px;color:#2b323b;white-space:pre;transform:scaleY(1.06);transform-origin:0 21.16px">  selector: <span style="color:#a3281a">&#x27;app-button&#x27;</span>,</div><div style="position:absolute;left:1338.94px;top:516.04px;font-family:'Liberation Mono', monospace;font-size:27.6px;line-height:27.6px;color:#c3c3c3;white-space:pre;transform:scaleY(1.1);transform-origin:0 21.16px">5</div><div style="position:absolute;left:1375.00px;top:516.04px;font-family:'Liberation Mono', monospace;font-size:27.6px;line-height:27.6px;color:#2b323b;white-space:pre;transform:scaleY(1.06);transform-origin:0 21.16px">  templateUrl: <span style="color:#a3281a">&#x27;./button.component.html&#x27;</span>,</div><div style="position:absolute;left:1338.94px;top:549.04px;font-family:'Liberation Mono', monospace;font-size:27.6px;line-height:27.6px;color:#c3c3c3;white-space:pre;transform:scaleY(1.1);transform-origin:0 21.16px">6</div><div style="position:absolute;left:1375.00px;top:549.04px;font-family:'Liberation Mono', monospace;font-size:27.6px;line-height:27.6px;color:#2b323b;white-space:pre;transform:scaleY(1.06);transform-origin:0 21.16px">  styleUrls: [<span style="color:#a3281a">&#x27;./button.component.css&#x27;</span>],</div><div style="position:absolute;left:1338.94px;top:582.04px;font-family:'Liberation Mono', monospace;font-size:27.6px;line-height:27.6px;color:#c3c3c3;white-space:pre;transform:scaleY(1.1);transform-origin:0 21.16px">7</div><div style="position:absolute;left:1375.00px;top:582.04px;font-family:'Liberation Mono', monospace;font-size:27.6px;line-height:27.6px;color:#2b323b;white-space:pre;transform:scaleY(1.06);transform-origin:0 21.16px">})</div><div style="position:absolute;left:1338.94px;top:615.04px;font-family:'Liberation Mono', monospace;font-size:27.6px;line-height:27.6px;color:#6e6e6e;white-space:pre;transform:scaleY(1.1);transform-origin:0 21.16px">8</div><div style="position:absolute;left:1375.00px;top:615.04px;font-family:'Liberation Mono', monospace;font-size:27.6px;line-height:27.6px;color:#2b323b;white-space:pre;transform:scaleY(1.06);transform-origin:0 21.16px"><span style="color:#991f8d">export</span> <span style="color:#991f8d">class</span> <span style="color:#2f7e6c">ButtonComponent</span> <span style="color:#991f8d">implements</span> <span style="color:#2f7e6c">OnInit</span> {</div><div style="position:absolute;left:1338.94px;top:648.04px;font-family:'Liberation Mono', monospace;font-size:27.6px;line-height:27.6px;color:#6e6e6e;white-space:pre;transform:scaleY(1.1);transform-origin:0 21.16px">9</div><div style="position:absolute;left:1375.00px;top:648.04px;font-family:'Liberation Mono', monospace;font-size:27.6px;line-height:27.6px;color:#2b323b;white-space:pre;transform:scaleY(1.06);transform-origin:0 21.16px">  @Input() label = <span style="color:#a3281a">&quot;?&quot;</span></div><div style="position:absolute;left:1322.38px;top:681.04px;font-family:'Liberation Mono', monospace;font-size:27.6px;line-height:27.6px;color:#6e6e6e;white-space:pre;transform:scaleY(1.1);transform-origin:0 21.16px">10</div><div style="position:absolute;left:1375.00px;top:681.04px;font-family:'Liberation Mono', monospace;font-size:27.6px;line-height:27.6px;color:#2b323b;white-space:pre;transform:scaleY(1.06);transform-origin:0 21.16px">  @Output() handleClick = <span style="color:#991f8d">new</span> EventEmitter&lt;<span style="color:#2f7e6c">string</span>&gt;();</div><div style="position:absolute;left:1322.38px;top:714.04px;font-family:'Liberation Mono', monospace;font-size:27.6px;line-height:27.6px;color:#c3c3c3;white-space:pre;transform:scaleY(1.1);transform-origin:0 21.16px">11</div><div style="position:absolute;left:1322.38px;top:747.04px;font-family:'Liberation Mono', monospace;font-size:27.6px;line-height:27.6px;color:#6e6e6e;white-space:pre;transform:scaleY(1.1);transform-origin:0 21.16px">12</div><div style="position:absolute;left:1375.00px;top:747.04px;font-family:'Liberation Mono', monospace;font-size:27.6px;line-height:27.6px;color:#2b323b;white-space:pre;transform:scaleY(1.06);transform-origin:0 21.16px">  constructor() {}</div><div style="position:absolute;left:1322.38px;top:780.04px;font-family:'Liberation Mono', monospace;font-size:27.6px;line-height:27.6px;color:#c3c3c3;white-space:pre;transform:scaleY(1.1);transform-origin:0 21.16px">13</div><div style="position:absolute;left:1322.38px;top:813.04px;font-family:'Liberation Mono', monospace;font-size:27.6px;line-height:27.6px;color:#6e6e6e;white-space:pre;transform:scaleY(1.1);transform-origin:0 21.16px">14</div><div style="position:absolute;left:1375.00px;top:813.04px;font-family:'Liberation Mono', monospace;font-size:27.6px;line-height:27.6px;color:#2b323b;white-space:pre;transform:scaleY(1.06);transform-origin:0 21.16px">  ngOnInit(): <span style="color:#991f8d">void</span> {}</div><div style="position:absolute;left:1322.38px;top:846.04px;font-family:'Liberation Mono', monospace;font-size:27.6px;line-height:27.6px;color:#c3c3c3;white-space:pre;transform:scaleY(1.1);transform-origin:0 21.16px">15</div><div style="position:absolute;left:1322.38px;top:879.04px;font-family:'Liberation Mono', monospace;font-size:27.6px;line-height:27.6px;color:#6e6e6e;white-space:pre;transform:scaleY(1.1);transform-origin:0 21.16px">16</div><div style="position:absolute;left:1375.00px;top:879.04px;font-family:'Liberation Mono', monospace;font-size:27.6px;line-height:27.6px;color:#2b323b;white-space:pre;transform:scaleY(1.06);transform-origin:0 21.16px">  onClick() {</div><div style="position:absolute;left:1322.38px;top:912.04px;font-family:'Liberation Mono', monospace;font-size:27.6px;line-height:27.6px;color:#6e6e6e;white-space:pre;transform:scaleY(1.1);transform-origin:0 21.16px">17</div><div style="position:absolute;left:1375.00px;top:912.04px;font-family:'Liberation Mono', monospace;font-size:27.6px;line-height:27.6px;color:#2b323b;white-space:pre;transform:scaleY(1.06);transform-origin:0 21.16px">    <span style="color:#991f8d">this</span>.handleClick.emit();</div><div style="position:absolute;left:1322.38px;top:945.04px;font-family:'Liberation Mono', monospace;font-size:27.6px;line-height:27.6px;color:#6e6e6e;white-space:pre;transform:scaleY(1.1);transform-origin:0 21.16px">18</div><div style="position:absolute;left:1375.00px;top:945.04px;font-family:'Liberation Mono', monospace;font-size:27.6px;line-height:27.6px;color:#2b323b;white-space:pre;transform:scaleY(1.06);transform-origin:0 21.16px">  }</div><div style="position:absolute;left:1322.38px;top:978.04px;font-family:'Liberation Mono', monospace;font-size:27.6px;line-height:27.6px;color:#c3c3c3;white-space:pre;transform:scaleY(1.1);transform-origin:0 21.16px">19</div><div style="position:absolute;left:1375.00px;top:978.04px;font-family:'Liberation Mono', monospace;font-size:27.6px;line-height:27.6px;color:#2b323b;white-space:pre;transform:scaleY(1.06);transform-origin:0 21.16px">}</div><div style="position:absolute;left:1322.38px;top:1011.04px;font-family:'Liberation Mono', monospace;font-size:27.6px;line-height:27.6px;color:#c3c3c3;white-space:pre;transform:scaleY(1.1);transform-origin:0 21.16px">20</div><div style="position:absolute;left:1374px;top:379.5px;width:2px;height:31px;background:#000;"></div><div style="position:absolute;left:1263px;top:1281px;width:1197px;height:2px;background:#cbcdd1;"></div><div style="position:absolute;left:1263px;top:1283px;width:1197px;height:65px;background:#f1f3f4;"></div><svg style="position:absolute;left:1280px;top:1296px;" width="48" height="40" viewBox="0 0 48 40"><path d="M20.5,6.5 Q13.5,6.5 13.5,11.5 L13.5,16 Q13.5,19.8 7,19.8 Q13.5,19.8 13.5,23.6 L13.5,28.5 Q13.5,33.5 20.5,33.5 M27.7,6.5 Q34.7,6.5 34.7,11.5 L34.7,16 Q34.7,19.8 41.2,19.8 Q34.7,19.8 34.7,23.6 L34.7,28.5 Q34.7,33.5 27.7,33.5" stroke="#6e6e6e" stroke-width="3.6" fill="none" stroke-linecap="round" stroke-linejoin="round"/></svg><div style="position:absolute;left:1831.50px;top:1301.61px;font-family:'Liberation Sans', sans-serif;font-size:30px;line-height:30px;color:#5f6368;white-space:pre;">(source mapped from <span style="text-decoration:underline;text-underline-offset:4px;text-decoration-thickness:2px">main.js</span>)</div><div style="position:absolute;left:2242.00px;top:1301.61px;font-family:'Liberation Sans', sans-serif;font-size:30px;line-height:30px;color:#5f6368;white-space:pre;">Coverage: n/a</div></div></div>
</body></html>
